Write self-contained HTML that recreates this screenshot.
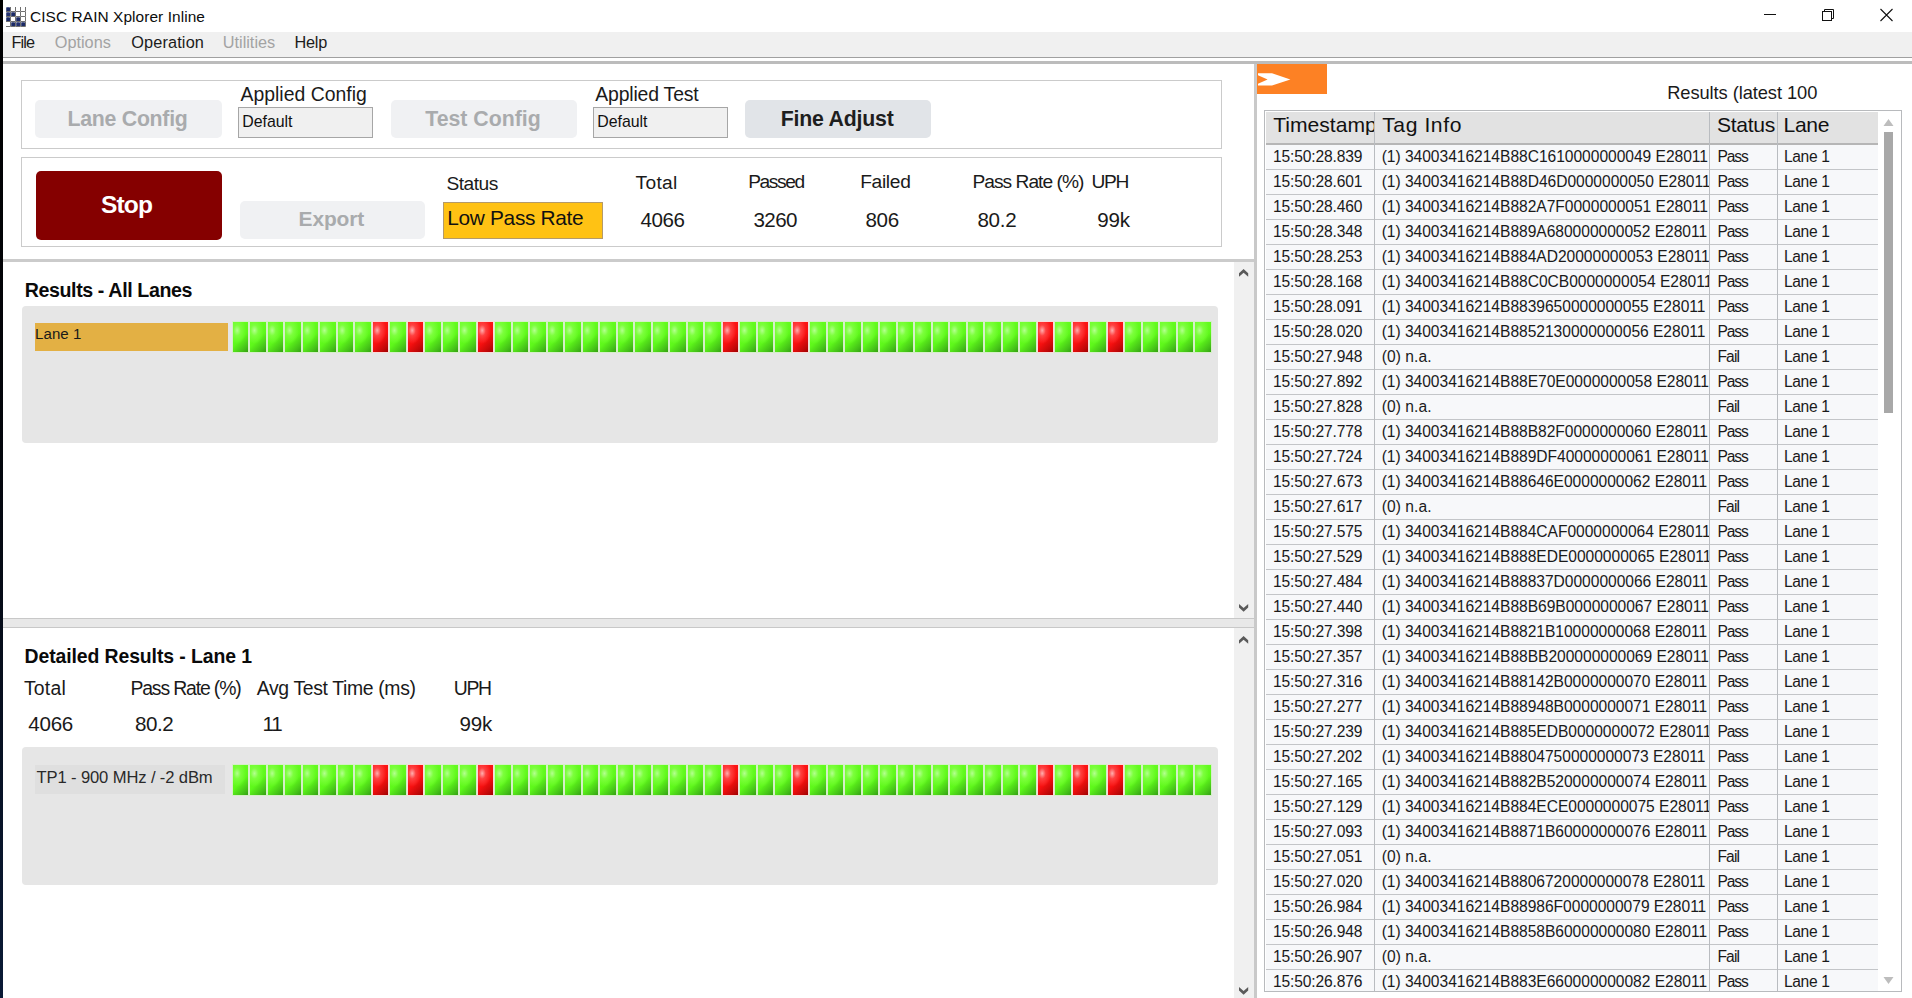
<!DOCTYPE html><html><head><meta charset="utf-8"><style>
*{margin:0;padding:0;box-sizing:border-box}
html,body{width:1912px;height:998px;overflow:hidden;background:#fff;font-family:"Liberation Sans",sans-serif}
.a{position:absolute}
.t{position:absolute;white-space:nowrap;line-height:1}
.cell{position:absolute;width:15.5px;height:30px;background:radial-gradient(ellipse 60% 45% at 28% 28%,#b4ff90 0%,#7cff3c 40%,rgba(90,255,20,0) 100%),linear-gradient(135deg,#6aff22 0%,#5ef81a 55%,#44c018 85%,#34a012 100%);box-shadow:0 0 0 1px rgba(205,245,185,.65)}
.cell.red{background:radial-gradient(ellipse 60% 45% at 28% 28%,#ffb0b0 0%,#ff4040 40%,rgba(255,20,20,0) 100%),linear-gradient(135deg,#ff1a1a 0%,#f81010 55%,#c00808 85%,#a00000 100%);box-shadow:0 0 0 1px rgba(255,215,215,.75)}
.row{position:absolute;left:1266px;width:612px;height:25px;background:#f7f8fa;border-bottom:1.5px solid #c3c5c8}
.chev{position:absolute;width:10px;height:8px}
</style></head><body>
<div class="a" style="left:0;top:0;width:3px;height:998px;background:linear-gradient(#000 0%,#04060c 45%,#0a1a36 100%)"></div>
<svg class="a" style="left:5px;top:6px" width="22" height="21" viewBox="0 0 22 21"><path d="M5.5 1 V5.5 H1" stroke="#707070" stroke-width="1" fill="none"/><path d="M10.5 1 V5.5 H6" stroke="#707070" stroke-width="1" fill="none"/><path d="M15.5 1 V5.5 H11" stroke="#707070" stroke-width="1" fill="none"/><path d="M20.5 1 V5.5 H16" stroke="#707070" stroke-width="1" fill="none"/><path d="M5.5 6 V10.5 H1" stroke="#707070" stroke-width="1" fill="none"/><path d="M10.5 6 V10.5 H6" stroke="#707070" stroke-width="1" fill="none"/><path d="M15.5 6 V10.5 H11" stroke="#707070" stroke-width="1" fill="none"/><path d="M20.5 6 V10.5 H16" stroke="#707070" stroke-width="1" fill="none"/><path d="M5.5 11 V15.5 H1" stroke="#707070" stroke-width="1" fill="none"/><path d="M10.5 11 V15.5 H6" stroke="#707070" stroke-width="1" fill="none"/><path d="M15.5 11 V15.5 H11" stroke="#707070" stroke-width="1" fill="none"/><path d="M20.5 11 V15.5 H16" stroke="#707070" stroke-width="1" fill="none"/><path d="M5.5 16 V20.5 H1" stroke="#707070" stroke-width="1" fill="none"/><path d="M10.5 16 V20.5 H6" stroke="#707070" stroke-width="1" fill="none"/><path d="M15.5 16 V20.5 H11" stroke="#707070" stroke-width="1" fill="none"/><path d="M20.5 16 V20.5 H16" stroke="#707070" stroke-width="1" fill="none"/><rect x="1.2" y="1.2" width="3.8" height="3.8" rx="0.6" fill="#1b2a66"/><rect x="1.2" y="6.2" width="3.8" height="3.8" rx="0.6" fill="#22306e"/><rect x="6.2" y="6.2" width="3.8" height="3.8" rx="0.6" fill="#1b2a66"/><rect x="1.2" y="11.2" width="3.8" height="3.8" rx="0.6" fill="#1b2a66"/><rect x="11.2" y="11.2" width="3.8" height="3.8" rx="0.6" fill="#1b2a66"/><rect x="6.2" y="16.2" width="3.8" height="3.8" rx="0.6" fill="#1b2a66"/><rect x="11.2" y="16.2" width="3.8" height="3.8" rx="0.6" fill="#22306e"/><rect x="16.2" y="16.2" width="3.8" height="3.8" rx="0.6" fill="#1b2a66"/></svg>
<div class="a" style="left:1764px;top:14px;width:12px;height:1px;background:#111"></div>
<svg class="a" style="left:1820px;top:8px" width="16" height="14" viewBox="0 0 16 14"><rect x="2.5" y="3.5" width="9" height="9" fill="none" stroke="#111" stroke-width="1"/><path d="M4.5 3.5 V1.5 H13.5 V10.5 H11.5" fill="none" stroke="#111" stroke-width="1"/></svg>
<svg class="a" style="left:1879px;top:8px" width="16" height="14" viewBox="0 0 16 14"><path d="M1.5 1 L13.5 13 M13.5 1 L1.5 13" stroke="#111" stroke-width="1.1"/></svg>
<div class="a" style="left:3px;top:32px;width:1909px;height:25px;background:#f0f0f0"></div>
<div class="a" style="left:3px;top:57px;width:1909px;height:1px;background:#a0a0a0"></div>
<div class="a" style="left:3px;top:61px;width:1909px;height:3px;background:#bcbcbc"></div>
<div class="a" style="left:20.5px;top:79.5px;width:1201.5px;height:69px;border:1.8px solid #cbcbcb"></div>
<div class="a" style="left:20.5px;top:156.8px;width:1201.5px;height:90.4px;border:1.8px solid #cbcbcb"></div>
<div class="a" style="left:35px;top:100px;width:187px;height:38px;background:#f0f1f3;border-radius:5px"></div>
<div class="a" style="left:391px;top:100px;width:186px;height:38px;background:#f0f1f3;border-radius:5px"></div>
<div class="a" style="left:745px;top:100px;width:186px;height:38px;background:#e1e4e8;border-radius:5px"></div>
<div class="a" style="left:238px;top:107px;width:135px;height:31px;background:#f0f0f0;border:1px solid #a6a6a6"></div>
<div class="a" style="left:593px;top:107px;width:135px;height:31px;background:#f0f0f0;border:1px solid #a6a6a6"></div>
<div class="a" style="left:35.5px;top:170.5px;width:186.5px;height:69px;background:#850000;border-radius:5px"></div>
<div class="a" style="left:240px;top:201px;width:185px;height:38px;background:#f0f1f3;border-radius:5px"></div>
<div class="a" style="left:443px;top:202px;width:160px;height:37px;background:#ffc214;border:1px solid #b49a6a"></div>
<div class="a" style="left:3px;top:259px;width:1252px;height:3px;background:#cbcbcb"></div>
<div class="a" style="left:1254px;top:64px;width:3px;height:934px;background:#c9c9c9"></div>
<div class="a" style="left:1234px;top:262px;width:20px;height:356px;background:#f0f0f0"></div>
<div class="a" style="left:1234px;top:628px;width:20px;height:370px;background:#f0f0f0"></div>
<svg class="a" style="left:1238.9px;top:269.2px" width="10" height="8" viewBox="0 0 10 8"><path d="M0 4.3 L4.6 0 L9.2 4.3 V7.7 L4.6 3.7 L0 7.7 Z" fill="#5a5a5a"/></svg>
<svg class="a" style="left:1238.9px;top:603.7px" width="10" height="8" viewBox="0 0 10 8"><path d="M0 0 V3.4 L4.6 7.7 L9.2 3.4 V0 L4.6 4.0 Z" fill="#5a5a5a"/></svg>
<svg class="a" style="left:1238.9px;top:635.6px" width="10" height="8" viewBox="0 0 10 8"><path d="M0 4.3 L4.6 0 L9.2 4.3 V7.7 L4.6 3.7 L0 7.7 Z" fill="#5a5a5a"/></svg>
<svg class="a" style="left:1238.9px;top:986.5px" width="10" height="8" viewBox="0 0 10 8"><path d="M0 0 V3.4 L4.6 7.7 L9.2 3.4 V0 L4.6 4.0 Z" fill="#5a5a5a"/></svg>
<div class="a" style="left:3px;top:618px;width:1251px;height:10px;background:#e8e8e8;border-top:1px solid #c8c8c8;border-bottom:1.5px solid #c8c8c8"></div>
<div class="a" style="left:21.8px;top:306px;width:1196.2px;height:136.5px;background:#e6e6e6;border-radius:4px"></div>
<div class="a" style="left:21.8px;top:747px;width:1196.2px;height:138px;background:#e6e6e6;border-radius:4px"></div>
<div class="a" style="left:35px;top:323px;width:193px;height:28px;background:#e3b044"></div>
<div class="a" style="left:35px;top:765px;width:190px;height:29px;background:#dfdfdf"></div>
<div class="cell" style="left:232.60px;top:322px"></div>
<div class="cell" style="left:250.10px;top:322px"></div>
<div class="cell" style="left:267.60px;top:322px"></div>
<div class="cell" style="left:285.10px;top:322px"></div>
<div class="cell" style="left:302.60px;top:322px"></div>
<div class="cell" style="left:320.10px;top:322px"></div>
<div class="cell" style="left:337.60px;top:322px"></div>
<div class="cell" style="left:355.10px;top:322px"></div>
<div class="cell red" style="left:372.60px;top:322px"></div>
<div class="cell" style="left:390.10px;top:322px"></div>
<div class="cell red" style="left:407.60px;top:322px"></div>
<div class="cell" style="left:425.10px;top:322px"></div>
<div class="cell" style="left:442.60px;top:322px"></div>
<div class="cell" style="left:460.10px;top:322px"></div>
<div class="cell red" style="left:477.60px;top:322px"></div>
<div class="cell" style="left:495.10px;top:322px"></div>
<div class="cell" style="left:512.60px;top:322px"></div>
<div class="cell" style="left:530.10px;top:322px"></div>
<div class="cell" style="left:547.60px;top:322px"></div>
<div class="cell" style="left:565.10px;top:322px"></div>
<div class="cell" style="left:582.60px;top:322px"></div>
<div class="cell" style="left:600.10px;top:322px"></div>
<div class="cell" style="left:617.60px;top:322px"></div>
<div class="cell" style="left:635.10px;top:322px"></div>
<div class="cell" style="left:652.60px;top:322px"></div>
<div class="cell" style="left:670.10px;top:322px"></div>
<div class="cell" style="left:687.60px;top:322px"></div>
<div class="cell" style="left:705.10px;top:322px"></div>
<div class="cell red" style="left:722.60px;top:322px"></div>
<div class="cell" style="left:740.10px;top:322px"></div>
<div class="cell" style="left:757.60px;top:322px"></div>
<div class="cell" style="left:775.10px;top:322px"></div>
<div class="cell red" style="left:792.60px;top:322px"></div>
<div class="cell" style="left:810.10px;top:322px"></div>
<div class="cell" style="left:827.60px;top:322px"></div>
<div class="cell" style="left:845.10px;top:322px"></div>
<div class="cell" style="left:862.60px;top:322px"></div>
<div class="cell" style="left:880.10px;top:322px"></div>
<div class="cell" style="left:897.60px;top:322px"></div>
<div class="cell" style="left:915.10px;top:322px"></div>
<div class="cell" style="left:932.60px;top:322px"></div>
<div class="cell" style="left:950.10px;top:322px"></div>
<div class="cell" style="left:967.60px;top:322px"></div>
<div class="cell" style="left:985.10px;top:322px"></div>
<div class="cell" style="left:1002.60px;top:322px"></div>
<div class="cell" style="left:1020.10px;top:322px"></div>
<div class="cell red" style="left:1037.60px;top:322px"></div>
<div class="cell" style="left:1055.10px;top:322px"></div>
<div class="cell red" style="left:1072.60px;top:322px"></div>
<div class="cell" style="left:1090.10px;top:322px"></div>
<div class="cell red" style="left:1107.60px;top:322px"></div>
<div class="cell" style="left:1125.10px;top:322px"></div>
<div class="cell" style="left:1142.60px;top:322px"></div>
<div class="cell" style="left:1160.10px;top:322px"></div>
<div class="cell" style="left:1177.60px;top:322px"></div>
<div class="cell" style="left:1195.10px;top:322px"></div>
<div class="cell" style="left:232.60px;top:765px"></div>
<div class="cell" style="left:250.10px;top:765px"></div>
<div class="cell" style="left:267.60px;top:765px"></div>
<div class="cell" style="left:285.10px;top:765px"></div>
<div class="cell" style="left:302.60px;top:765px"></div>
<div class="cell" style="left:320.10px;top:765px"></div>
<div class="cell" style="left:337.60px;top:765px"></div>
<div class="cell" style="left:355.10px;top:765px"></div>
<div class="cell red" style="left:372.60px;top:765px"></div>
<div class="cell" style="left:390.10px;top:765px"></div>
<div class="cell red" style="left:407.60px;top:765px"></div>
<div class="cell" style="left:425.10px;top:765px"></div>
<div class="cell" style="left:442.60px;top:765px"></div>
<div class="cell" style="left:460.10px;top:765px"></div>
<div class="cell red" style="left:477.60px;top:765px"></div>
<div class="cell" style="left:495.10px;top:765px"></div>
<div class="cell" style="left:512.60px;top:765px"></div>
<div class="cell" style="left:530.10px;top:765px"></div>
<div class="cell" style="left:547.60px;top:765px"></div>
<div class="cell" style="left:565.10px;top:765px"></div>
<div class="cell" style="left:582.60px;top:765px"></div>
<div class="cell" style="left:600.10px;top:765px"></div>
<div class="cell" style="left:617.60px;top:765px"></div>
<div class="cell" style="left:635.10px;top:765px"></div>
<div class="cell" style="left:652.60px;top:765px"></div>
<div class="cell" style="left:670.10px;top:765px"></div>
<div class="cell" style="left:687.60px;top:765px"></div>
<div class="cell" style="left:705.10px;top:765px"></div>
<div class="cell red" style="left:722.60px;top:765px"></div>
<div class="cell" style="left:740.10px;top:765px"></div>
<div class="cell" style="left:757.60px;top:765px"></div>
<div class="cell" style="left:775.10px;top:765px"></div>
<div class="cell red" style="left:792.60px;top:765px"></div>
<div class="cell" style="left:810.10px;top:765px"></div>
<div class="cell" style="left:827.60px;top:765px"></div>
<div class="cell" style="left:845.10px;top:765px"></div>
<div class="cell" style="left:862.60px;top:765px"></div>
<div class="cell" style="left:880.10px;top:765px"></div>
<div class="cell" style="left:897.60px;top:765px"></div>
<div class="cell" style="left:915.10px;top:765px"></div>
<div class="cell" style="left:932.60px;top:765px"></div>
<div class="cell" style="left:950.10px;top:765px"></div>
<div class="cell" style="left:967.60px;top:765px"></div>
<div class="cell" style="left:985.10px;top:765px"></div>
<div class="cell" style="left:1002.60px;top:765px"></div>
<div class="cell" style="left:1020.10px;top:765px"></div>
<div class="cell red" style="left:1037.60px;top:765px"></div>
<div class="cell" style="left:1055.10px;top:765px"></div>
<div class="cell red" style="left:1072.60px;top:765px"></div>
<div class="cell" style="left:1090.10px;top:765px"></div>
<div class="cell red" style="left:1107.60px;top:765px"></div>
<div class="cell" style="left:1125.10px;top:765px"></div>
<div class="cell" style="left:1142.60px;top:765px"></div>
<div class="cell" style="left:1160.10px;top:765px"></div>
<div class="cell" style="left:1177.60px;top:765px"></div>
<div class="cell" style="left:1195.10px;top:765px"></div>
<div class="a" style="left:1257px;top:64px;width:70px;height:30px;background:#fd8124"></div>
<svg class="a" style="left:1257px;top:64px" width="40" height="30" viewBox="0 0 40 30"><path d="M1 9.2 H15 L33.4 15.4 L15 21.6 H1 V19.7 L10.6 15.4 L1 11.2 Z" fill="#fff"/></svg>
<div class="a" style="left:1264px;top:110px;width:638px;height:882px;border:1.5px solid #b8babd;background:#fff"></div>
<div class="a" style="left:1266px;top:112px;width:612px;height:31px;background:#e2e2e2"></div>
<div class="a" style="left:1266px;top:143px;width:612px;height:2.5px;background:#b6b6b6"></div>
<div class="row" style="top:145.3px;height:25px"></div>
<div class="row" style="top:170.29px;height:25px"></div>
<div class="row" style="top:195.27px;height:25px"></div>
<div class="row" style="top:220.25px;height:25px"></div>
<div class="row" style="top:245.24px;height:25px"></div>
<div class="row" style="top:270.23px;height:25px"></div>
<div class="row" style="top:295.21px;height:25px"></div>
<div class="row" style="top:320.19px;height:25px"></div>
<div class="row" style="top:345.18px;height:25px"></div>
<div class="row" style="top:370.17px;height:25px"></div>
<div class="row" style="top:395.15px;height:25px"></div>
<div class="row" style="top:420.13px;height:25px"></div>
<div class="row" style="top:445.12px;height:25px"></div>
<div class="row" style="top:470.11px;height:25px"></div>
<div class="row" style="top:495.09px;height:25px"></div>
<div class="row" style="top:520.08px;height:25px"></div>
<div class="row" style="top:545.06px;height:25px"></div>
<div class="row" style="top:570.05px;height:25px"></div>
<div class="row" style="top:595.03px;height:25px"></div>
<div class="row" style="top:620.01px;height:25px"></div>
<div class="row" style="top:645.0px;height:25px"></div>
<div class="row" style="top:669.98px;height:25px"></div>
<div class="row" style="top:694.97px;height:25px"></div>
<div class="row" style="top:719.95px;height:25px"></div>
<div class="row" style="top:744.94px;height:25px"></div>
<div class="row" style="top:769.92px;height:25px"></div>
<div class="row" style="top:794.91px;height:25px"></div>
<div class="row" style="top:819.89px;height:25px"></div>
<div class="row" style="top:844.88px;height:25px"></div>
<div class="row" style="top:869.87px;height:25px"></div>
<div class="row" style="top:894.85px;height:25px"></div>
<div class="row" style="top:919.84px;height:25px"></div>
<div class="row" style="top:944.82px;height:25px"></div>
<div class="row" style="top:969.81px;height:21.19px;border-bottom:none"></div>
<div class="a" style="left:1373.7px;top:112px;width:1.5px;height:879px;background:#b9bcc0"></div>
<div class="a" style="left:1708.6px;top:112px;width:1.5px;height:879px;background:#b9bcc0"></div>
<div class="a" style="left:1776.6px;top:112px;width:1.5px;height:879px;background:#b9bcc0"></div>
<svg class="a" style="left:1883px;top:118px" width="11" height="9" viewBox="0 0 11 9"><path d="M0.5 8 L5.5 1 L10.5 8 Z" fill="#bdbdbd"/></svg>
<div class="a" style="left:1884px;top:132px;width:9px;height:281px;background:#a8a8a8"></div>
<svg class="a" style="left:1883px;top:976px" width="11" height="9" viewBox="0 0 11 9"><path d="M0.5 1 L5.5 8 L10.5 1 Z" fill="#bdbdbd"/></svg>
<div class="t" id="title" style="left:30.06px;top:9.06px;font-size:15.45px;letter-spacing:0.069px;font-weight:normal;color:#0c0c0c">CISC RAIN Xplorer Inline</div>
<div class="t" id="m_file" style="left:11.62px;top:34.20px;font-size:16.30px;letter-spacing:-0.960px;font-weight:normal;color:#1c1c1c">File</div>
<div class="t" id="m_options" style="left:54.76px;top:34.20px;font-size:16.30px;letter-spacing:0.000px;font-weight:normal;color:#a3a3a3">Options</div>
<div class="t" id="m_operation" style="left:131.14px;top:34.20px;font-size:16.30px;letter-spacing:0.159px;font-weight:normal;color:#1c1c1c">Operation</div>
<div class="t" id="m_utilities" style="left:222.74px;top:34.20px;font-size:16.30px;letter-spacing:0.001px;font-weight:normal;color:#a3a3a3">Utilities</div>
<div class="t" id="m_help" style="left:294.38px;top:34.20px;font-size:16.30px;letter-spacing:-0.180px;font-weight:normal;color:#1c1c1c">Help</div>
<div class="t" id="b_lane" style="left:67.51px;top:109.49px;font-size:21.30px;letter-spacing:-0.270px;font-weight:bold;color:#a9abad">Lane Config</div>
<div class="t" id="applied_config" style="left:240.44px;top:84.88px;font-size:19.40px;letter-spacing:0.015px;font-weight:normal;color:#1a1a1a">Applied Config</div>
<div class="t" id="default1" style="left:242.29px;top:114.14px;font-size:15.90px;letter-spacing:-0.030px;font-weight:normal;color:#111">Default</div>
<div class="t" id="b_test" style="left:425.31px;top:109.49px;font-size:21.30px;letter-spacing:-0.018px;font-weight:bold;color:#a9abad">Test Config</div>
<div class="t" id="applied_test" style="left:595.32px;top:84.88px;font-size:19.40px;letter-spacing:-0.178px;font-weight:normal;color:#1a1a1a">Applied Test</div>
<div class="t" id="default2" style="left:597.29px;top:114.14px;font-size:15.90px;letter-spacing:-0.030px;font-weight:normal;color:#111">Default</div>
<div class="t" id="b_fine" style="left:780.77px;top:109.49px;font-size:21.30px;letter-spacing:-0.216px;font-weight:bold;color:#1e1e1e">Fine Adjust</div>
<div class="t" id="b_stop" style="left:101.08px;top:193.14px;font-size:24.55px;letter-spacing:-0.900px;font-weight:bold;color:#ffffff">Stop</div>
<div class="t" id="b_export" style="left:298.55px;top:208.77px;font-size:20.94px;letter-spacing:-0.108px;font-weight:bold;color:#a9abad">Export</div>
<div class="t" id="status_lbl" style="left:446.56px;top:173.69px;font-size:19.20px;letter-spacing:-0.540px;font-weight:normal;color:#1a1a1a">Status</div>
<div class="t" id="lowpass" style="left:447.30px;top:207.85px;font-size:20.87px;letter-spacing:-0.330px;font-weight:normal;color:#111">Low Pass Rate</div>
<div class="t" id="total_lbl" style="left:635.58px;top:172.89px;font-size:19.20px;letter-spacing:0.273px;font-weight:normal;color:#1a1a1a">Total</div>
<div class="t" id="passed_lbl" style="left:748.18px;top:172.39px;font-size:19.20px;letter-spacing:-1.404px;font-weight:normal;color:#1a1a1a">Passed</div>
<div class="t" id="failed_lbl" style="left:860.18px;top:172.39px;font-size:19.20px;letter-spacing:-0.324px;font-weight:normal;color:#1a1a1a">Failed</div>
<div class="t" id="pr_lbl" style="left:972.54px;top:172.39px;font-size:19.20px;letter-spacing:-0.990px;font-weight:normal;color:#1a1a1a">Pass Rate (%)</div>
<div class="t" id="uph_lbl" style="left:1091.56px;top:172.39px;font-size:19.20px;letter-spacing:-1.350px;font-weight:normal;color:#1a1a1a">UPH</div>
<div class="t" id="v_total" style="left:640.60px;top:209.62px;font-size:20.60px;letter-spacing:-0.480px;font-weight:normal;color:#1a1a1a">4066</div>
<div class="t" id="v_passed" style="left:753.46px;top:209.62px;font-size:20.60px;letter-spacing:-0.600px;font-weight:normal;color:#1a1a1a">3260</div>
<div class="t" id="v_failed" style="left:865.46px;top:209.62px;font-size:20.60px;letter-spacing:-0.360px;font-weight:normal;color:#1a1a1a">806</div>
<div class="t" id="v_pr" style="left:977.46px;top:209.62px;font-size:20.60px;letter-spacing:-0.300px;font-weight:normal;color:#1a1a1a">80.2</div>
<div class="t" id="v_uph" style="left:1097.22px;top:209.62px;font-size:20.60px;letter-spacing:-0.180px;font-weight:normal;color:#1a1a1a">99k</div>
<div class="t" id="res_all" style="left:24.65px;top:280.87px;font-size:19.64px;letter-spacing:-0.390px;font-weight:bold;color:#0a0a0a">Results - All Lanes</div>
<div class="t" id="lane1" style="left:35.07px;top:325.64px;font-size:15.07px;letter-spacing:0.036px;font-weight:normal;color:#1a1a1a">Lane 1</div>
<div class="t" id="det_title" style="left:24.54px;top:646.59px;font-size:19.41px;letter-spacing:-0.096px;font-weight:bold;color:#0a0a0a">Detailed Results - Lane 1</div>
<div class="t" id="d_total_lbl" style="left:23.92px;top:678.88px;font-size:19.40px;letter-spacing:0.228px;font-weight:normal;color:#1a1a1a">Total</div>
<div class="t" id="d_pr_lbl" style="left:130.40px;top:678.88px;font-size:19.40px;letter-spacing:-1.140px;font-weight:normal;color:#1a1a1a">Pass Rate (%)</div>
<div class="t" id="d_att_lbl" style="left:256.80px;top:678.88px;font-size:19.40px;letter-spacing:-0.358px;font-weight:normal;color:#1a1a1a">Avg Test Time (ms)</div>
<div class="t" id="d_uph_lbl" style="left:453.66px;top:678.88px;font-size:19.40px;letter-spacing:-1.260px;font-weight:normal;color:#1a1a1a">UPH</div>
<div class="t" id="d_total" style="left:28.36px;top:714.36px;font-size:20.60px;letter-spacing:-0.300px;font-weight:normal;color:#1a1a1a">4066</div>
<div class="t" id="d_pr" style="left:135.08px;top:714.36px;font-size:20.60px;letter-spacing:-0.480px;font-weight:normal;color:#1a1a1a">80.2</div>
<div class="t" id="d_att" style="left:262.46px;top:714.36px;font-size:20.60px;letter-spacing:-1.080px;font-weight:normal;color:#1a1a1a">11</div>
<div class="t" id="d_uph" style="left:459.60px;top:714.36px;font-size:20.60px;letter-spacing:-0.270px;font-weight:normal;color:#1a1a1a">99k</div>
<div class="t" id="tp1" style="left:36.50px;top:770.07px;font-size:16.60px;letter-spacing:-0.129px;font-weight:normal;color:#2a2a2a">TP1 - 900 MHz / -2 dBm</div>
<div class="t" id="res_latest" style="left:1667.22px;top:83.78px;font-size:18.31px;letter-spacing:-0.080px;font-weight:normal;color:#1a1a1a">Results (latest 100</div>
<div class="t" id="h_ts" style="left:1273.18px;top:114.19px;font-size:21.10px;letter-spacing:0.000px;font-weight:normal;color:#111;width:100.52px;overflow:hidden">Timestamp</div>
<div class="t" id="h_tag" style="left:1382.18px;top:114.19px;font-size:21.10px;letter-spacing:0.592px;font-weight:normal;color:#111">Tag Info</div>
<div class="t" id="h_status" style="left:1717.04px;top:114.19px;font-size:21.10px;letter-spacing:-0.324px;font-weight:normal;color:#111">Status</div>
<div class="t" id="h_lane" style="left:1783.52px;top:114.19px;font-size:21.10px;letter-spacing:-0.360px;font-weight:normal;color:#111">Lane</div>
<div class="t" id="r_ts" style="left:1272.91px;top:149.41px;font-size:15.60px;letter-spacing:-0.130px;font-weight:normal;color:#1a1a1a">15:50:28.839</div>
<div class="t" id="r_tag" style="left:1381.67px;top:149.41px;font-size:15.60px;letter-spacing:-0.029px;font-weight:normal;color:#1a1a1a;width:326.93px;overflow:hidden">(1) 34003416214B88C1610000000049 E28011</div>
<div class="t" id="r_pass" style="left:1717.43px;top:149.41px;font-size:15.60px;letter-spacing:-1.080px;font-weight:normal;color:#1a1a1a">Pass</div>
<div class="t" id="r_lane" style="left:1783.91px;top:149.41px;font-size:15.60px;letter-spacing:-0.324px;font-weight:normal;color:#1a1a1a">Lane 1</div>
<div class="t" style="left:1272.91px;top:174.41px;font-size:15.60px;letter-spacing:-0.130px;font-weight:normal;color:#1a1a1a">15:50:28.601</div>
<div class="t" style="left:1381.67px;top:174.41px;font-size:15.60px;letter-spacing:-0.029px;font-weight:normal;color:#1a1a1a;width:326.93px;overflow:hidden">(1) 34003416214B88D46D0000000050 E28011</div>
<div class="t" style="left:1717.43px;top:174.41px;font-size:15.60px;letter-spacing:-1.080px;font-weight:normal;color:#1a1a1a">Pass</div>
<div class="t" style="left:1783.91px;top:174.41px;font-size:15.60px;letter-spacing:-0.324px;font-weight:normal;color:#1a1a1a">Lane 1</div>
<div class="t" style="left:1272.91px;top:199.41px;font-size:15.60px;letter-spacing:-0.130px;font-weight:normal;color:#1a1a1a">15:50:28.460</div>
<div class="t" style="left:1381.67px;top:199.41px;font-size:15.60px;letter-spacing:-0.029px;font-weight:normal;color:#1a1a1a;width:326.93px;overflow:hidden">(1) 34003416214B882A7F0000000051 E28011</div>
<div class="t" style="left:1717.43px;top:199.41px;font-size:15.60px;letter-spacing:-1.080px;font-weight:normal;color:#1a1a1a">Pass</div>
<div class="t" style="left:1783.91px;top:199.41px;font-size:15.60px;letter-spacing:-0.324px;font-weight:normal;color:#1a1a1a">Lane 1</div>
<div class="t" style="left:1272.91px;top:224.41px;font-size:15.60px;letter-spacing:-0.130px;font-weight:normal;color:#1a1a1a">15:50:28.348</div>
<div class="t" style="left:1381.67px;top:224.41px;font-size:15.60px;letter-spacing:-0.029px;font-weight:normal;color:#1a1a1a;width:326.93px;overflow:hidden">(1) 34003416214B889A680000000052 E28011</div>
<div class="t" style="left:1717.43px;top:224.41px;font-size:15.60px;letter-spacing:-1.080px;font-weight:normal;color:#1a1a1a">Pass</div>
<div class="t" style="left:1783.91px;top:224.41px;font-size:15.60px;letter-spacing:-0.324px;font-weight:normal;color:#1a1a1a">Lane 1</div>
<div class="t" style="left:1272.91px;top:249.41px;font-size:15.60px;letter-spacing:-0.130px;font-weight:normal;color:#1a1a1a">15:50:28.253</div>
<div class="t" style="left:1381.67px;top:249.41px;font-size:15.60px;letter-spacing:-0.029px;font-weight:normal;color:#1a1a1a;width:326.93px;overflow:hidden">(1) 34003416214B884AD20000000053 E28011</div>
<div class="t" style="left:1717.43px;top:249.41px;font-size:15.60px;letter-spacing:-1.080px;font-weight:normal;color:#1a1a1a">Pass</div>
<div class="t" style="left:1783.91px;top:249.41px;font-size:15.60px;letter-spacing:-0.324px;font-weight:normal;color:#1a1a1a">Lane 1</div>
<div class="t" style="left:1272.91px;top:274.41px;font-size:15.60px;letter-spacing:-0.130px;font-weight:normal;color:#1a1a1a">15:50:28.168</div>
<div class="t" style="left:1381.67px;top:274.41px;font-size:15.60px;letter-spacing:-0.029px;font-weight:normal;color:#1a1a1a;width:326.93px;overflow:hidden">(1) 34003416214B88C0CB0000000054 E28011</div>
<div class="t" style="left:1717.43px;top:274.41px;font-size:15.60px;letter-spacing:-1.080px;font-weight:normal;color:#1a1a1a">Pass</div>
<div class="t" style="left:1783.91px;top:274.41px;font-size:15.60px;letter-spacing:-0.324px;font-weight:normal;color:#1a1a1a">Lane 1</div>
<div class="t" style="left:1272.91px;top:299.41px;font-size:15.60px;letter-spacing:-0.130px;font-weight:normal;color:#1a1a1a">15:50:28.091</div>
<div class="t" style="left:1381.67px;top:299.41px;font-size:15.60px;letter-spacing:-0.029px;font-weight:normal;color:#1a1a1a;width:326.93px;overflow:hidden">(1) 34003416214B8839650000000055 E28011</div>
<div class="t" style="left:1717.43px;top:299.41px;font-size:15.60px;letter-spacing:-1.080px;font-weight:normal;color:#1a1a1a">Pass</div>
<div class="t" style="left:1783.91px;top:299.41px;font-size:15.60px;letter-spacing:-0.324px;font-weight:normal;color:#1a1a1a">Lane 1</div>
<div class="t" style="left:1272.91px;top:324.41px;font-size:15.60px;letter-spacing:-0.130px;font-weight:normal;color:#1a1a1a">15:50:28.020</div>
<div class="t" style="left:1381.67px;top:324.41px;font-size:15.60px;letter-spacing:-0.029px;font-weight:normal;color:#1a1a1a;width:326.93px;overflow:hidden">(1) 34003416214B8852130000000056 E28011</div>
<div class="t" style="left:1717.43px;top:324.41px;font-size:15.60px;letter-spacing:-1.080px;font-weight:normal;color:#1a1a1a">Pass</div>
<div class="t" style="left:1783.91px;top:324.41px;font-size:15.60px;letter-spacing:-0.324px;font-weight:normal;color:#1a1a1a">Lane 1</div>
<div class="t" style="left:1272.91px;top:349.41px;font-size:15.60px;letter-spacing:-0.130px;font-weight:normal;color:#1a1a1a">15:50:27.948</div>
<div class="t" id="r_na" style="left:1381.67px;top:349.41px;font-size:15.60px;letter-spacing:0.076px;font-weight:normal;color:#1a1a1a">(0) n.a.</div>
<div class="t" id="r_fail" style="left:1717.43px;top:349.41px;font-size:15.60px;letter-spacing:-0.840px;font-weight:normal;color:#1a1a1a">Fail</div>
<div class="t" style="left:1783.91px;top:349.41px;font-size:15.60px;letter-spacing:-0.324px;font-weight:normal;color:#1a1a1a">Lane 1</div>
<div class="t" style="left:1272.91px;top:374.41px;font-size:15.60px;letter-spacing:-0.130px;font-weight:normal;color:#1a1a1a">15:50:27.892</div>
<div class="t" style="left:1381.67px;top:374.41px;font-size:15.60px;letter-spacing:-0.029px;font-weight:normal;color:#1a1a1a;width:326.93px;overflow:hidden">(1) 34003416214B88E70E0000000058 E28011</div>
<div class="t" style="left:1717.43px;top:374.41px;font-size:15.60px;letter-spacing:-1.080px;font-weight:normal;color:#1a1a1a">Pass</div>
<div class="t" style="left:1783.91px;top:374.41px;font-size:15.60px;letter-spacing:-0.324px;font-weight:normal;color:#1a1a1a">Lane 1</div>
<div class="t" style="left:1272.91px;top:399.41px;font-size:15.60px;letter-spacing:-0.130px;font-weight:normal;color:#1a1a1a">15:50:27.828</div>
<div class="t" style="left:1381.67px;top:399.41px;font-size:15.60px;letter-spacing:0.076px;font-weight:normal;color:#1a1a1a">(0) n.a.</div>
<div class="t" style="left:1717.43px;top:399.41px;font-size:15.60px;letter-spacing:-0.840px;font-weight:normal;color:#1a1a1a">Fail</div>
<div class="t" style="left:1783.91px;top:399.41px;font-size:15.60px;letter-spacing:-0.324px;font-weight:normal;color:#1a1a1a">Lane 1</div>
<div class="t" style="left:1272.91px;top:424.41px;font-size:15.60px;letter-spacing:-0.130px;font-weight:normal;color:#1a1a1a">15:50:27.778</div>
<div class="t" style="left:1381.67px;top:424.41px;font-size:15.60px;letter-spacing:-0.029px;font-weight:normal;color:#1a1a1a;width:326.93px;overflow:hidden">(1) 34003416214B88B82F0000000060 E28011</div>
<div class="t" style="left:1717.43px;top:424.41px;font-size:15.60px;letter-spacing:-1.080px;font-weight:normal;color:#1a1a1a">Pass</div>
<div class="t" style="left:1783.91px;top:424.41px;font-size:15.60px;letter-spacing:-0.324px;font-weight:normal;color:#1a1a1a">Lane 1</div>
<div class="t" style="left:1272.91px;top:449.41px;font-size:15.60px;letter-spacing:-0.130px;font-weight:normal;color:#1a1a1a">15:50:27.724</div>
<div class="t" style="left:1381.67px;top:449.41px;font-size:15.60px;letter-spacing:-0.029px;font-weight:normal;color:#1a1a1a;width:326.93px;overflow:hidden">(1) 34003416214B889DF40000000061 E28011</div>
<div class="t" style="left:1717.43px;top:449.41px;font-size:15.60px;letter-spacing:-1.080px;font-weight:normal;color:#1a1a1a">Pass</div>
<div class="t" style="left:1783.91px;top:449.41px;font-size:15.60px;letter-spacing:-0.324px;font-weight:normal;color:#1a1a1a">Lane 1</div>
<div class="t" style="left:1272.91px;top:474.41px;font-size:15.60px;letter-spacing:-0.130px;font-weight:normal;color:#1a1a1a">15:50:27.673</div>
<div class="t" style="left:1381.67px;top:474.41px;font-size:15.60px;letter-spacing:-0.029px;font-weight:normal;color:#1a1a1a;width:326.93px;overflow:hidden">(1) 34003416214B88646E0000000062 E28011</div>
<div class="t" style="left:1717.43px;top:474.41px;font-size:15.60px;letter-spacing:-1.080px;font-weight:normal;color:#1a1a1a">Pass</div>
<div class="t" style="left:1783.91px;top:474.41px;font-size:15.60px;letter-spacing:-0.324px;font-weight:normal;color:#1a1a1a">Lane 1</div>
<div class="t" style="left:1272.91px;top:499.41px;font-size:15.60px;letter-spacing:-0.130px;font-weight:normal;color:#1a1a1a">15:50:27.617</div>
<div class="t" style="left:1381.67px;top:499.41px;font-size:15.60px;letter-spacing:0.076px;font-weight:normal;color:#1a1a1a">(0) n.a.</div>
<div class="t" style="left:1717.43px;top:499.41px;font-size:15.60px;letter-spacing:-0.840px;font-weight:normal;color:#1a1a1a">Fail</div>
<div class="t" style="left:1783.91px;top:499.41px;font-size:15.60px;letter-spacing:-0.324px;font-weight:normal;color:#1a1a1a">Lane 1</div>
<div class="t" style="left:1272.91px;top:524.41px;font-size:15.60px;letter-spacing:-0.130px;font-weight:normal;color:#1a1a1a">15:50:27.575</div>
<div class="t" style="left:1381.67px;top:524.41px;font-size:15.60px;letter-spacing:-0.029px;font-weight:normal;color:#1a1a1a;width:326.93px;overflow:hidden">(1) 34003416214B884CAF0000000064 E28011</div>
<div class="t" style="left:1717.43px;top:524.41px;font-size:15.60px;letter-spacing:-1.080px;font-weight:normal;color:#1a1a1a">Pass</div>
<div class="t" style="left:1783.91px;top:524.41px;font-size:15.60px;letter-spacing:-0.324px;font-weight:normal;color:#1a1a1a">Lane 1</div>
<div class="t" style="left:1272.91px;top:549.41px;font-size:15.60px;letter-spacing:-0.130px;font-weight:normal;color:#1a1a1a">15:50:27.529</div>
<div class="t" style="left:1381.67px;top:549.41px;font-size:15.60px;letter-spacing:-0.029px;font-weight:normal;color:#1a1a1a;width:326.93px;overflow:hidden">(1) 34003416214B888EDE0000000065 E28011</div>
<div class="t" style="left:1717.43px;top:549.41px;font-size:15.60px;letter-spacing:-1.080px;font-weight:normal;color:#1a1a1a">Pass</div>
<div class="t" style="left:1783.91px;top:549.41px;font-size:15.60px;letter-spacing:-0.324px;font-weight:normal;color:#1a1a1a">Lane 1</div>
<div class="t" style="left:1272.91px;top:574.41px;font-size:15.60px;letter-spacing:-0.130px;font-weight:normal;color:#1a1a1a">15:50:27.484</div>
<div class="t" style="left:1381.67px;top:574.41px;font-size:15.60px;letter-spacing:-0.029px;font-weight:normal;color:#1a1a1a;width:326.93px;overflow:hidden">(1) 34003416214B88837D0000000066 E28011</div>
<div class="t" style="left:1717.43px;top:574.41px;font-size:15.60px;letter-spacing:-1.080px;font-weight:normal;color:#1a1a1a">Pass</div>
<div class="t" style="left:1783.91px;top:574.41px;font-size:15.60px;letter-spacing:-0.324px;font-weight:normal;color:#1a1a1a">Lane 1</div>
<div class="t" style="left:1272.91px;top:599.41px;font-size:15.60px;letter-spacing:-0.130px;font-weight:normal;color:#1a1a1a">15:50:27.440</div>
<div class="t" style="left:1381.67px;top:599.41px;font-size:15.60px;letter-spacing:-0.029px;font-weight:normal;color:#1a1a1a;width:326.93px;overflow:hidden">(1) 34003416214B88B69B0000000067 E28011</div>
<div class="t" style="left:1717.43px;top:599.41px;font-size:15.60px;letter-spacing:-1.080px;font-weight:normal;color:#1a1a1a">Pass</div>
<div class="t" style="left:1783.91px;top:599.41px;font-size:15.60px;letter-spacing:-0.324px;font-weight:normal;color:#1a1a1a">Lane 1</div>
<div class="t" style="left:1272.91px;top:624.41px;font-size:15.60px;letter-spacing:-0.130px;font-weight:normal;color:#1a1a1a">15:50:27.398</div>
<div class="t" style="left:1381.67px;top:624.41px;font-size:15.60px;letter-spacing:-0.029px;font-weight:normal;color:#1a1a1a;width:326.93px;overflow:hidden">(1) 34003416214B8821B10000000068 E28011</div>
<div class="t" style="left:1717.43px;top:624.41px;font-size:15.60px;letter-spacing:-1.080px;font-weight:normal;color:#1a1a1a">Pass</div>
<div class="t" style="left:1783.91px;top:624.41px;font-size:15.60px;letter-spacing:-0.324px;font-weight:normal;color:#1a1a1a">Lane 1</div>
<div class="t" style="left:1272.91px;top:649.41px;font-size:15.60px;letter-spacing:-0.130px;font-weight:normal;color:#1a1a1a">15:50:27.357</div>
<div class="t" style="left:1381.67px;top:649.41px;font-size:15.60px;letter-spacing:-0.029px;font-weight:normal;color:#1a1a1a;width:326.93px;overflow:hidden">(1) 34003416214B88BB200000000069 E28011</div>
<div class="t" style="left:1717.43px;top:649.41px;font-size:15.60px;letter-spacing:-1.080px;font-weight:normal;color:#1a1a1a">Pass</div>
<div class="t" style="left:1783.91px;top:649.41px;font-size:15.60px;letter-spacing:-0.324px;font-weight:normal;color:#1a1a1a">Lane 1</div>
<div class="t" style="left:1272.91px;top:674.41px;font-size:15.60px;letter-spacing:-0.130px;font-weight:normal;color:#1a1a1a">15:50:27.316</div>
<div class="t" style="left:1381.67px;top:674.41px;font-size:15.60px;letter-spacing:-0.029px;font-weight:normal;color:#1a1a1a;width:326.93px;overflow:hidden">(1) 34003416214B88142B0000000070 E28011</div>
<div class="t" style="left:1717.43px;top:674.41px;font-size:15.60px;letter-spacing:-1.080px;font-weight:normal;color:#1a1a1a">Pass</div>
<div class="t" style="left:1783.91px;top:674.41px;font-size:15.60px;letter-spacing:-0.324px;font-weight:normal;color:#1a1a1a">Lane 1</div>
<div class="t" style="left:1272.91px;top:699.41px;font-size:15.60px;letter-spacing:-0.130px;font-weight:normal;color:#1a1a1a">15:50:27.277</div>
<div class="t" style="left:1381.67px;top:699.41px;font-size:15.60px;letter-spacing:-0.029px;font-weight:normal;color:#1a1a1a;width:326.93px;overflow:hidden">(1) 34003416214B88948B0000000071 E28011</div>
<div class="t" style="left:1717.43px;top:699.41px;font-size:15.60px;letter-spacing:-1.080px;font-weight:normal;color:#1a1a1a">Pass</div>
<div class="t" style="left:1783.91px;top:699.41px;font-size:15.60px;letter-spacing:-0.324px;font-weight:normal;color:#1a1a1a">Lane 1</div>
<div class="t" style="left:1272.91px;top:724.41px;font-size:15.60px;letter-spacing:-0.130px;font-weight:normal;color:#1a1a1a">15:50:27.239</div>
<div class="t" style="left:1381.67px;top:724.41px;font-size:15.60px;letter-spacing:-0.029px;font-weight:normal;color:#1a1a1a;width:326.93px;overflow:hidden">(1) 34003416214B885EDB0000000072 E28011</div>
<div class="t" style="left:1717.43px;top:724.41px;font-size:15.60px;letter-spacing:-1.080px;font-weight:normal;color:#1a1a1a">Pass</div>
<div class="t" style="left:1783.91px;top:724.41px;font-size:15.60px;letter-spacing:-0.324px;font-weight:normal;color:#1a1a1a">Lane 1</div>
<div class="t" style="left:1272.91px;top:749.41px;font-size:15.60px;letter-spacing:-0.130px;font-weight:normal;color:#1a1a1a">15:50:27.202</div>
<div class="t" style="left:1381.67px;top:749.41px;font-size:15.60px;letter-spacing:-0.029px;font-weight:normal;color:#1a1a1a;width:326.93px;overflow:hidden">(1) 34003416214B8804750000000073 E28011</div>
<div class="t" style="left:1717.43px;top:749.41px;font-size:15.60px;letter-spacing:-1.080px;font-weight:normal;color:#1a1a1a">Pass</div>
<div class="t" style="left:1783.91px;top:749.41px;font-size:15.60px;letter-spacing:-0.324px;font-weight:normal;color:#1a1a1a">Lane 1</div>
<div class="t" style="left:1272.91px;top:774.41px;font-size:15.60px;letter-spacing:-0.130px;font-weight:normal;color:#1a1a1a">15:50:27.165</div>
<div class="t" style="left:1381.67px;top:774.41px;font-size:15.60px;letter-spacing:-0.029px;font-weight:normal;color:#1a1a1a;width:326.93px;overflow:hidden">(1) 34003416214B882B520000000074 E28011</div>
<div class="t" style="left:1717.43px;top:774.41px;font-size:15.60px;letter-spacing:-1.080px;font-weight:normal;color:#1a1a1a">Pass</div>
<div class="t" style="left:1783.91px;top:774.41px;font-size:15.60px;letter-spacing:-0.324px;font-weight:normal;color:#1a1a1a">Lane 1</div>
<div class="t" style="left:1272.91px;top:799.41px;font-size:15.60px;letter-spacing:-0.130px;font-weight:normal;color:#1a1a1a">15:50:27.129</div>
<div class="t" style="left:1381.67px;top:799.41px;font-size:15.60px;letter-spacing:-0.029px;font-weight:normal;color:#1a1a1a;width:326.93px;overflow:hidden">(1) 34003416214B884ECE0000000075 E28011</div>
<div class="t" style="left:1717.43px;top:799.41px;font-size:15.60px;letter-spacing:-1.080px;font-weight:normal;color:#1a1a1a">Pass</div>
<div class="t" style="left:1783.91px;top:799.41px;font-size:15.60px;letter-spacing:-0.324px;font-weight:normal;color:#1a1a1a">Lane 1</div>
<div class="t" style="left:1272.91px;top:824.41px;font-size:15.60px;letter-spacing:-0.130px;font-weight:normal;color:#1a1a1a">15:50:27.093</div>
<div class="t" style="left:1381.67px;top:824.41px;font-size:15.60px;letter-spacing:-0.029px;font-weight:normal;color:#1a1a1a;width:326.93px;overflow:hidden">(1) 34003416214B8871B60000000076 E28011</div>
<div class="t" style="left:1717.43px;top:824.41px;font-size:15.60px;letter-spacing:-1.080px;font-weight:normal;color:#1a1a1a">Pass</div>
<div class="t" style="left:1783.91px;top:824.41px;font-size:15.60px;letter-spacing:-0.324px;font-weight:normal;color:#1a1a1a">Lane 1</div>
<div class="t" style="left:1272.91px;top:849.41px;font-size:15.60px;letter-spacing:-0.130px;font-weight:normal;color:#1a1a1a">15:50:27.051</div>
<div class="t" style="left:1381.67px;top:849.41px;font-size:15.60px;letter-spacing:0.076px;font-weight:normal;color:#1a1a1a">(0) n.a.</div>
<div class="t" style="left:1717.43px;top:849.41px;font-size:15.60px;letter-spacing:-0.840px;font-weight:normal;color:#1a1a1a">Fail</div>
<div class="t" style="left:1783.91px;top:849.41px;font-size:15.60px;letter-spacing:-0.324px;font-weight:normal;color:#1a1a1a">Lane 1</div>
<div class="t" style="left:1272.91px;top:874.41px;font-size:15.60px;letter-spacing:-0.130px;font-weight:normal;color:#1a1a1a">15:50:27.020</div>
<div class="t" style="left:1381.67px;top:874.41px;font-size:15.60px;letter-spacing:-0.029px;font-weight:normal;color:#1a1a1a;width:326.93px;overflow:hidden">(1) 34003416214B8806720000000078 E28011</div>
<div class="t" style="left:1717.43px;top:874.41px;font-size:15.60px;letter-spacing:-1.080px;font-weight:normal;color:#1a1a1a">Pass</div>
<div class="t" style="left:1783.91px;top:874.41px;font-size:15.60px;letter-spacing:-0.324px;font-weight:normal;color:#1a1a1a">Lane 1</div>
<div class="t" style="left:1272.91px;top:899.41px;font-size:15.60px;letter-spacing:-0.130px;font-weight:normal;color:#1a1a1a">15:50:26.984</div>
<div class="t" style="left:1381.67px;top:899.41px;font-size:15.60px;letter-spacing:-0.029px;font-weight:normal;color:#1a1a1a;width:326.93px;overflow:hidden">(1) 34003416214B88986F0000000079 E28011</div>
<div class="t" style="left:1717.43px;top:899.41px;font-size:15.60px;letter-spacing:-1.080px;font-weight:normal;color:#1a1a1a">Pass</div>
<div class="t" style="left:1783.91px;top:899.41px;font-size:15.60px;letter-spacing:-0.324px;font-weight:normal;color:#1a1a1a">Lane 1</div>
<div class="t" style="left:1272.91px;top:924.41px;font-size:15.60px;letter-spacing:-0.130px;font-weight:normal;color:#1a1a1a">15:50:26.948</div>
<div class="t" style="left:1381.67px;top:924.41px;font-size:15.60px;letter-spacing:-0.029px;font-weight:normal;color:#1a1a1a;width:326.93px;overflow:hidden">(1) 34003416214B8858B60000000080 E28011</div>
<div class="t" style="left:1717.43px;top:924.41px;font-size:15.60px;letter-spacing:-1.080px;font-weight:normal;color:#1a1a1a">Pass</div>
<div class="t" style="left:1783.91px;top:924.41px;font-size:15.60px;letter-spacing:-0.324px;font-weight:normal;color:#1a1a1a">Lane 1</div>
<div class="t" style="left:1272.91px;top:949.41px;font-size:15.60px;letter-spacing:-0.130px;font-weight:normal;color:#1a1a1a">15:50:26.907</div>
<div class="t" style="left:1381.67px;top:949.41px;font-size:15.60px;letter-spacing:0.076px;font-weight:normal;color:#1a1a1a">(0) n.a.</div>
<div class="t" style="left:1717.43px;top:949.41px;font-size:15.60px;letter-spacing:-0.840px;font-weight:normal;color:#1a1a1a">Fail</div>
<div class="t" style="left:1783.91px;top:949.41px;font-size:15.60px;letter-spacing:-0.324px;font-weight:normal;color:#1a1a1a">Lane 1</div>
<div class="t" style="left:1272.91px;top:974.41px;font-size:15.60px;letter-spacing:-0.130px;font-weight:normal;color:#1a1a1a">15:50:26.876</div>
<div class="t" style="left:1381.67px;top:974.41px;font-size:15.60px;letter-spacing:-0.029px;font-weight:normal;color:#1a1a1a;width:326.93px;overflow:hidden">(1) 34003416214B883E660000000082 E28011</div>
<div class="t" style="left:1717.43px;top:974.41px;font-size:15.60px;letter-spacing:-1.080px;font-weight:normal;color:#1a1a1a">Pass</div>
<div class="t" style="left:1783.91px;top:974.41px;font-size:15.60px;letter-spacing:-0.324px;font-weight:normal;color:#1a1a1a">Lane 1</div>
</body></html>
